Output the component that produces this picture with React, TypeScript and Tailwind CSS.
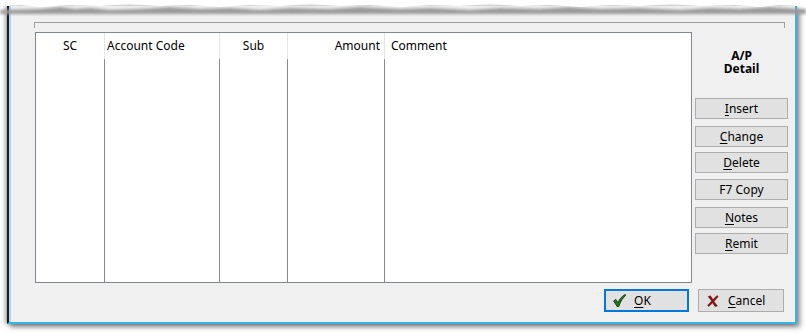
import React from "react";

const font = { fontFamily: '"Noto Sans", "Open Sans", sans-serif' };

const cols = [
  { label: "SC", w: "w-[69px]", align: "justify-center" },
  { label: "Account Code", w: "w-[115px]", align: "justify-start pl-[2px]" },
  { label: "Sub", w: "w-[68px]", align: "justify-center" },
  { label: "Amount", w: "w-[97px]", align: "justify-end pr-[4px]" },
];

const SideButton = ({ k, rest, top }: { k?: string; rest: string; top: string }) => (
  <button
    className={`${top} flex h-[21px] w-[93px] items-center justify-center border border-[#adadad] bg-[#e1e1e1] text-[12px] text-black`}
  >
    {k && <u className="underline-offset-2">{k}</u>}
    {rest}
  </button>
);

const CheckIcon = () => (
  <svg width="13" height="13" viewBox="0 0 12 12">
    <path
      d="M0.6 6.4 L2.6 5 L4.4 8 C6 4.8 8.4 1.8 11.4 0.4 L11.7 1.4 C9 3.4 6.9 6.8 5.4 11.5 L3.8 11.5 Z"
      fill="#1f7a1f"
      stroke="#0b330b"
      strokeWidth="0.8"
    />
  </svg>
);

const XIcon = () => (
  <svg width="12" height="12" viewBox="0 0 12 12">
    <path
      d="M1.2 1.6 L3.4 0.8 L6 4.6 L10 0.6 L11.2 1.6 L7 6.4 L10.4 11 L8 11.4 L5.6 7.8 L1.8 11.4 L0.6 10.4 L4.6 6 Z"
      fill="#8e1111"
      stroke="#5a0a0a"
      strokeWidth="0.5"
    />
  </svg>
);

export default function App() {
  return (
    <div className="relative h-[333px] w-[806px] overflow-hidden bg-white pt-[6px] pl-[7px]" style={font}>
      {/* torn top edge */}
      <svg className="absolute left-0 top-0" width="806" height="16" viewBox="0 0 806 16">
        <defs>
          <filter id="b" x="-5%" y="-50%" width="110%" height="200%">
            <feGaussianBlur stdDeviation="1.6" />
          </filter>
        </defs>
        <path
          d="M0 10 L40 9 L60 7 L75 9 L90 8 L110 10 L140 9 L170 7 L200 9 L230 8 L260 10 L290 8 L330 9 L360 7 L400 9 L430 8 L470 10 L500 8 L540 9 L570 7 L600 9 L640 8 L680 10 L710 8 L740 9 L770 7 L800 9 L806 9 L806 14 L0 14 Z"
          fill="#9a9a9a"
          filter="url(#b)"
        />
        <path
          d="M0 0 L806 0 L806 6 L780 5 L760 7 L735 5 L700 6 L670 4 L640 6 L610 5 L580 7 L550 5 L520 6 L490 4 L460 6 L430 5 L400 7 L370 5 L340 6 L310 4 L280 6 L250 5 L220 7 L190 5 L160 6 L130 4 L100 6 L70 5 L40 7 L20 5 L0 6 Z"
          fill="#ffffff"
        />
      </svg>

      <div className="h-[318px] w-[790px] border-l-2 border-r-2 border-b-2 border-l-[#1c1c1c] border-r-[#35b4e8] border-b-[#35b4e8] bg-[#f0f0f0] shadow-[3px_3px_5px_rgba(0,0,0,0.45),-2px_0_4px_rgba(0,0,0,0.35)]">
        <div className="h-full border-l-2 border-[#a8d4f2] pl-[23px] pt-[16px]">
          {/* groove */}
          <div className="h-[6px] w-[751px] border-t border-l border-r border-[#a0a0a0] border-b-white" />

          <div className="mt-[4px] flex">
            {/* grid */}
            <div className="ml-[1px] flex h-[251px] w-[657px] border border-[#828790] bg-white text-[12px] text-black">
              {cols.map((c) => (
                <div key={c.label} className={`flex ${c.w} flex-col`}>
                  <div className={`flex h-[26px] items-center border-r border-[#e5e5e5] ${c.align}`}>
                    {c.label}
                  </div>
                  <div className="flex-1 border-r border-[#8a8a8a]" />
                </div>
              ))}
              <div className="flex flex-1 flex-col">
                <div className="flex h-[26px] items-center pl-[6px]">Comment</div>
              </div>
            </div>

            {/* side panel */}
            <div className="ml-[3px] flex w-[93px] flex-col">
              <div className="mt-[17px] flex flex-col items-center text-[12px] font-bold leading-[13px] text-black">
                <span>A/P</span>
                <span>Detail</span>
              </div>
              <SideButton top="mt-[23px]" k="I" rest="nsert" />
              <SideButton top="mt-[7px]" k="C" rest="hange" />
              <SideButton top="mt-[5px]" k="D" rest="elete" />
              <SideButton top="mt-[6px]" rest="F7 Copy" />
              <SideButton top="mt-[7px]" k="N" rest="otes" />
              <SideButton top="mt-[5px]" k="R" rest="emit" />
            </div>
          </div>

          {/* bottom buttons */}
          <div className="mt-[6px] flex w-[750px] justify-end gap-[9px] text-[12px] text-black">
            <button className="flex h-[23px] w-[85px] items-center border-2 border-[#0078d7] bg-[#e1e1e1] pl-[7px]">
              <CheckIcon />
              <span className="ml-[8px]">
                <u className="underline-offset-2">O</u>K
              </span>
            </button>
            <button className="flex h-[23px] w-[86px] items-center border border-[#adadad] bg-[#e1e1e1] pl-[8px]">
              <XIcon />
              <span className="ml-[9px]">
                <u className="underline-offset-2">C</u>ancel
              </span>
            </button>
          </div>
        </div>
      </div>
    </div>
  );
}
